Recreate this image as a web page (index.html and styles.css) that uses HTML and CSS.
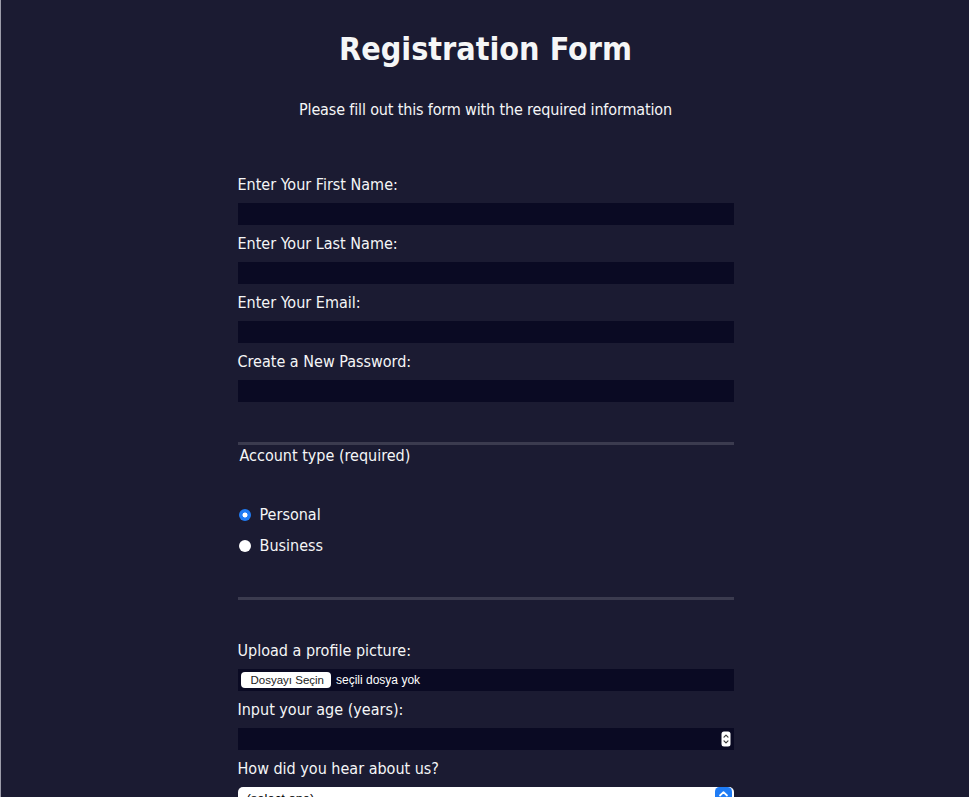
FILE: index.html
```html
<!DOCTYPE html>
<html lang="en">
<head>
<meta charset="utf-8">
<title>Registration Form</title>
<link rel="stylesheet" href="styles.css">
</head>
<body>
<h1 class="title">Registration Form</h1>
<p class="subtitle">Please fill out this form with the required information</p>
<form class="form" action="#">
  <fieldset class="group group-first">
    <label class="field">Enter Your First Name: <input class="text-input" type="text" name="first-name"></label>
    <label class="field">Enter Your Last Name: <input class="text-input" type="text" name="last-name"></label>
    <label class="field">Enter Your Email: <input class="text-input" type="email" name="email"></label>
    <label class="field">Create a New Password: <input class="text-input" type="password" name="password"></label>
  </fieldset>
  <fieldset class="group group-radio">
    <legend class="legend">Account type (required)</legend>
    <label class="radio-row"><input class="radio" type="radio" name="account-type" checked> Personal</label>
    <label class="radio-row"><input class="radio" type="radio" name="account-type"> Business</label>
  </fieldset>
  <fieldset class="group group-last">
    <label class="field">Upload a profile picture:
      <span class="file-input"><span class="file-btn">Dosyayı Seçin</span><span class="file-text">seçili dosya yok</span></span>
    </label>
    <label class="field">Input your age (years):
      <span class="number-wrap">
        <input class="text-input number-input" type="number" name="age" min="13" max="120">
        <svg class="stepper" viewBox="0 0 10 16" width="10" height="16" aria-hidden="true">
          <rect x="0.5" y="0.5" width="9" height="15" rx="2.5" fill="#ffffff"/>
          <polyline points="3,6.2 5,4.2 7,6.2" fill="none" stroke="#3a3a3a" stroke-width="1.2" stroke-linecap="round" stroke-linejoin="round"/>
          <polyline points="3,9.8 5,11.8 7,9.8" fill="none" stroke="#3a3a3a" stroke-width="1.2" stroke-linecap="round" stroke-linejoin="round"/>
        </svg>
      </span>
    </label>
    <label class="field">How did you hear about us?
      <span class="select-wrap">
        <select class="select" name="referrer">
          <option value="">(select one)</option>
          <option value="1">freeCodeCamp News</option>
          <option value="2">freeCodeCamp YouTube Channel</option>
          <option value="3">freeCodeCamp Forum</option>
          <option value="4">Other</option>
        </select>
        <svg class="select-arrow" viewBox="0 0 17 22" width="17" height="22" aria-hidden="true">
          <rect x="0" y="0" width="17" height="22" rx="4.5" fill="#1f7cf5"/>
          <polyline points="5,8.5 8.5,5.2 12,8.5" fill="none" stroke="#ffffff" stroke-width="1.8" stroke-linecap="round" stroke-linejoin="round"/>
          <polyline points="5,13.5 8.5,16.8 12,13.5" fill="none" stroke="#ffffff" stroke-width="1.8" stroke-linecap="round" stroke-linejoin="round"/>
        </svg>
      </span>
    </label>
  </fieldset>
</form>
</body>
</html>
```

FILE: styles.css
```css
html {
  background-color: #1b1b32;
}

body {
  margin: 0;
  min-height: 100vh;
  box-sizing: border-box;
  border-left: 1px solid #9c9caa;
  padding-left: 1px;
  background-color: #1b1b32;
  color: #f5f6f7;
  font-family: "DejaVu Sans Condensed", "DejaVu Sans", sans-serif;
  font-stretch: condensed;
  font-size: 16px;
}

.title {
  margin: 30px 0 0;
  font-size: 32px;
  line-height: 38px;
  font-weight: 700;
  text-align: center;
}

.subtitle {
  margin: 33px 0 15px;
  line-height: 18px;
  letter-spacing: -0.15px;
  text-align: center;
}

.form {
  width: 496px;
  margin: 0 auto;
}

.group {
  margin: 0;
  min-width: 0;
  border: none;
  border-bottom: 3px solid #3b3b4f;
  padding: 32px 0 31px;
}

.group-last {
  padding-top: 32px;
  border-bottom: none;
}

.group-radio {
  padding: 29px 0 32px;
}

.legend {
  padding: 0 2px;
  line-height: 21px;
}

.field {
  display: block;
  margin: 9px 0;
  line-height: 19px;
}

.text-input {
  display: block;
  box-sizing: border-box;
  width: 100%;
  height: 22px;
  margin: 9px 0 0;
  padding: 0 4px;
  background-color: #0a0a23;
  border: 1px solid #0a0a23;
  color: #ffffff;
  font: inherit;
  outline: none;
}

.number-input {
  appearance: textfield;
  -moz-appearance: textfield;
}

.number-input::-webkit-inner-spin-button,
.number-input::-webkit-outer-spin-button {
  -webkit-appearance: none;
  margin: 0;
}

.number-wrap,
.select-wrap {
  display: block;
  position: relative;
}

.stepper {
  position: absolute;
  right: 3px;
  top: 3px;
  display: block;
}

.radio-row {
  display: flex;
  align-items: center;
  height: 23px;
  margin: 8px 0;
}

.radio {
  appearance: none;
  -webkit-appearance: none;
  width: 12px;
  height: 12px;
  margin: 0 9px 0 1px;
  border-radius: 50%;
  background-color: #ffffff;
  border: none;
  flex: none;
}

.radio:checked {
  background: radial-gradient(circle, #ffffff 0 2.2px, #1f7cf5 2.8px);
}

.file-input {
  display: flex;
  align-items: center;
  box-sizing: border-box;
  height: 22px;
  margin-top: 9px;
  padding-left: 3px;
  background-color: #0a0a23;
}

.file-btn {
  height: 16px;
  padding: 0 7px 0 10px;
  background-color: #ffffff;
  border-radius: 4px;
  color: #222222;
  font-family: "Liberation Sans", Arial, sans-serif;
  font-stretch: normal;
  font-size: 11.5px;
  line-height: 16px;
}

.file-text {
  margin-left: 5px;
  color: #ffffff;
  font-family: "Liberation Sans", Arial, sans-serif;
  font-stretch: normal;
  font-size: 12px;
}

.select {
  appearance: none;
  -webkit-appearance: none;
  display: block;
  box-sizing: border-box;
  width: 100%;
  height: 22px;
  margin: 9px 0 0;
  padding: 0 0 0 9px;
  border: none;
  border-radius: 5px;
  background-color: #ffffff;
  color: #000000;
  font-family: "Liberation Sans", Arial, sans-serif;
  font-size: 13px;
}

.select-arrow {
  position: absolute;
  right: 2px;
  top: 0;
  display: block;
}
```
